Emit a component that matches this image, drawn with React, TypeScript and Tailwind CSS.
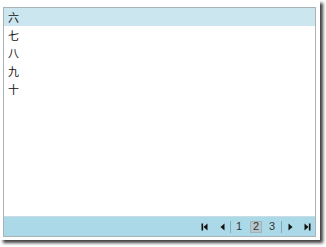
const rows = ['六', '七', '八', '九', '十'];

function First() {
    return (
        <svg width="7" height="8" viewBox="0 0 7 8">
            <rect x="0.5" y="0.5" width="1.6" height="7" fill="#111" />
            <path d="M6.5 0.5 L2.5 4 L6.5 7.5 Z" fill="#111" />
        </svg>
    );
}

function Prev() {
    return (
        <svg width="5" height="8" viewBox="0 0 5 8">
            <path d="M4.5 0.5 L0.5 4 L4.5 7.5 Z" fill="#111" />
        </svg>
    );
}

function Next() {
    return (
        <svg width="5" height="8" viewBox="0 0 5 8">
            <path d="M0.5 0.5 L4.5 4 L0.5 7.5 Z" fill="#111" />
        </svg>
    );
}

function Last() {
    return (
        <svg width="7" height="8" viewBox="0 0 7 8">
            <path d="M0.5 0.5 L4.5 4 L0.5 7.5 Z" fill="#111" />
            <rect x="4.9" y="0.5" width="1.6" height="7" fill="#111" />
        </svg>
    );
}

export default function App() {
    return (
        <div className="w-[326px] h-[247px] bg-white">
            <div className="w-[320px] h-[240px] bg-white pl-[3px] pt-[7px] shadow-[3px_3px_3px_rgba(0,0,0,0.75)]">
                <div className="w-[313px] h-[230px] flex flex-col border border-[#a9b3b8] bg-white font-['Noto_Sans_CJK_SC',sans-serif] text-[11px] text-[#111]">
                    {/* List */}
                    <div className="flex-1 flex flex-col">
                        {rows.map((r, i) => (
                            <div
                                key={r}
                                className={`h-[18px] flex items-center pl-[4px] ${i === 0 ? 'bg-[#cce6ef]' : ''}`}
                            >
                                {r}
                            </div>
                        ))}
                    </div>

                    {/* Pager */}
                    <div className="h-[20px] bg-[#acd9e7] border-t border-[#c9dde4] flex items-center justify-end pr-px font-['Liberation_Sans',sans-serif] text-[11px] text-[#333]">
                        <div className="w-[14px] flex justify-center"><First /></div>
                        <div className="w-[14px] flex justify-center ml-[4px]"><Prev /></div>
                        <div className="w-px h-[12px] bg-[#7fa9b6] ml-px" />
                        <div className="w-[14px] text-center ml-px">1</div>
                        <div className="w-[12px] h-[12px] flex items-center justify-center bg-[#b5c6cc] border border-[#9fb3ba] ml-[4px]">2</div>
                        <div className="w-[14px] text-center ml-[3px]">3</div>
                        <div className="w-px h-[12px] bg-[#7fa9b6] ml-[2px]" />
                        <div className="w-[14px] flex justify-center ml-px"><Next /></div>
                        <div className="w-[14px] flex justify-center ml-[3px]"><Last /></div>
                    </div>
                </div>
            </div>
        </div>
    );
}
